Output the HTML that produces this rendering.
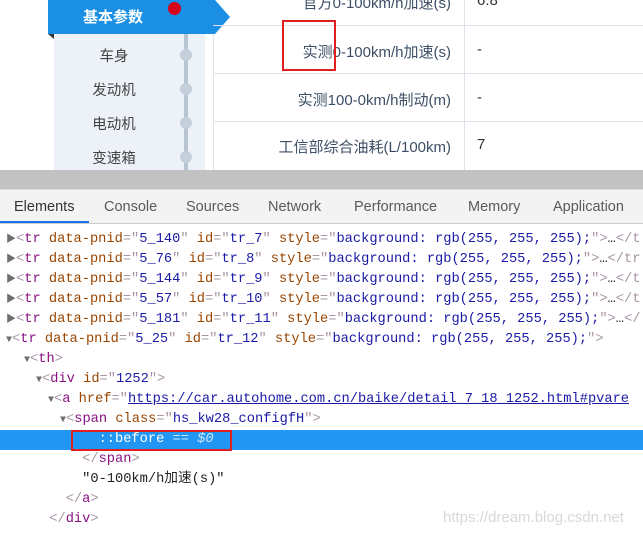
<!DOCTYPE html>
<html><head><meta charset="utf-8"><style>
*{margin:0;padding:0;box-sizing:border-box}
body{width:643px;height:537px;overflow:hidden;background:#fff;font-family:"Liberation Sans","Noto Sans CJK SC",sans-serif;position:relative}
.abs{position:absolute}
.side{left:54px;top:34px;width:151px;height:136px;background:#edf2f9}
.tab{left:48px;top:0;width:167px;height:34px;background:#1a8fe3;color:#fff;font-weight:bold;font-size:15px;line-height:36px;padding-left:35px}
.arrow{left:215px;top:0;width:0;height:0;border-top:17px solid transparent;border-bottom:17px solid transparent;border-left:15px solid #1a8fe3}
.vline{left:184px;top:0;width:4px;height:170px;background:#b8c4d2}
.dot{width:12px;height:12px;border-radius:50%;background:#c5cfdb;left:180px}
.si{left:64px;width:100px;text-align:center;font-size:14.5px;color:#444}
.cell{font-size:15px;color:#3d4f66;text-align:right;width:260px;left:191px}
.val{left:477px;font-size:15px;color:#333}
.hl{left:213px;width:430px;height:1px;background:#dde3ea}
.c{position:absolute;left:0;height:20px;font-family:"Liberation Mono","Noto Sans CJK SC",monospace;font-size:13.7px;white-space:pre;line-height:20px;color:#222}
.t{color:#881280}.a{color:#994500}.v{color:#1a1aa6}.g{color:#a894a6}
.tri{color:#6e6e6e;font-size:10px}
</style></head><body>
<div class="abs side"></div>
<div class="abs" style="left:205px;top:34px;width:8px;height:136px;background:#fff"></div>
<div class="abs vline"></div>
<div class="abs tab">基本参数</div>
<div class="abs arrow"></div>
<div class="abs" style="left:48px;top:34px;width:0;height:0;border-top:5px solid #333;border-left:6px solid transparent"></div>
<div class="abs" style="left:168px;top:2px;width:13px;height:13px;border-radius:50%;background:#d9001a"></div>
<div class="abs dot" style="top:49px"></div>
<div class="abs dot" style="top:83px"></div>
<div class="abs dot" style="top:117px"></div>
<div class="abs dot" style="top:151px"></div>
<div class="abs si" style="top:45px">车身</div>
<div class="abs si" style="top:79px">发动机</div>
<div class="abs si" style="top:113px">电动机</div>
<div class="abs si" style="top:147px">变速箱</div>
<div class="abs" style="left:213px;top:34px;width:1px;height:136px;background:#dde3ea"></div>
<div class="abs" style="left:464px;top:0;width:1px;height:170px;background:#dde3ea"></div>
<div class="abs hl" style="top:25px"></div>
<div class="abs hl" style="top:73px"></div>
<div class="abs hl" style="top:121px"></div>
<div class="abs cell" style="top:-8px">官方0-100km/h加速(s)</div>
<div class="abs val" style="top:-8px">6.8</div>
<div class="abs cell" style="top:41px">实测0-100km/h加速(s)</div>
<div class="abs val" style="top:41px">-</div>
<div class="abs cell" style="top:89px">实测100-0km/h制动(m)</div>
<div class="abs val" style="top:89px">-</div>
<div class="abs cell" style="top:136px">工信部综合油耗(L/100km)</div>
<div class="abs val" style="top:136px">7</div>
<div class="abs" style="left:282px;top:20px;width:54px;height:51px;border:2px solid #e02020"></div>
<div class="abs" style="left:0;top:170px;width:643px;height:19px;background:#c2c2c2"></div>
<div class="abs" style="left:0;top:189px;width:643px;height:35px;background:#f3f3f3;border-bottom:1px solid #ccc;border-top:1px solid #ddd"></div>
<div class="abs" style="left:0;top:221px;width:89px;height:2px;background:#1a73e8"></div>
<div class="abs" style="top:199px;left:14px;font-size:14.5px;color:#333">Elements</div>
<div class="abs" style="top:199px;left:104px;font-size:14.5px;color:#5a5a5a">Console</div>
<div class="abs" style="top:199px;left:186px;font-size:14.5px;color:#5a5a5a">Sources</div>
<div class="abs" style="top:199px;left:268px;font-size:14.5px;color:#5a5a5a">Network</div>
<div class="abs" style="top:199px;left:354px;font-size:14.5px;color:#5a5a5a">Performance</div>
<div class="abs" style="top:199px;left:468px;font-size:14.5px;color:#5a5a5a">Memory</div>
<div class="abs" style="top:199px;left:553px;font-size:14.5px;color:#5a5a5a">Application</div>
<div class="abs" style="left:0;top:430px;width:643px;height:20px;background:#2196f3"></div>
<div class="c" style="top:230px"><span class="tri"> ▶</span><span class="g">&lt;</span><span class="t">tr</span> <span class="a">data-pnid</span><span class="g">="</span><span class="v">5_140</span><span class="g">"</span> <span class="a">id</span><span class="g">="</span><span class="v">tr_7</span><span class="g">"</span> <span class="a">style</span><span class="g">="</span><span class="v">background: rgb(255, 255, 255);</span><span class="g">"&gt;</span>…<span class="g">&lt;/t</span></div>
<div class="c" style="top:250px"><span class="tri"> ▶</span><span class="g">&lt;</span><span class="t">tr</span> <span class="a">data-pnid</span><span class="g">="</span><span class="v">5_76</span><span class="g">"</span> <span class="a">id</span><span class="g">="</span><span class="v">tr_8</span><span class="g">"</span> <span class="a">style</span><span class="g">="</span><span class="v">background: rgb(255, 255, 255);</span><span class="g">"&gt;</span>…<span class="g">&lt;/tr</span></div>
<div class="c" style="top:270px"><span class="tri"> ▶</span><span class="g">&lt;</span><span class="t">tr</span> <span class="a">data-pnid</span><span class="g">="</span><span class="v">5_144</span><span class="g">"</span> <span class="a">id</span><span class="g">="</span><span class="v">tr_9</span><span class="g">"</span> <span class="a">style</span><span class="g">="</span><span class="v">background: rgb(255, 255, 255);</span><span class="g">"&gt;</span>…<span class="g">&lt;/t</span></div>
<div class="c" style="top:290px"><span class="tri"> ▶</span><span class="g">&lt;</span><span class="t">tr</span> <span class="a">data-pnid</span><span class="g">="</span><span class="v">5_57</span><span class="g">"</span> <span class="a">id</span><span class="g">="</span><span class="v">tr_10</span><span class="g">"</span> <span class="a">style</span><span class="g">="</span><span class="v">background: rgb(255, 255, 255);</span><span class="g">"&gt;</span>…<span class="g">&lt;/t</span></div>
<div class="c" style="top:310px"><span class="tri"> ▶</span><span class="g">&lt;</span><span class="t">tr</span> <span class="a">data-pnid</span><span class="g">="</span><span class="v">5_181</span><span class="g">"</span> <span class="a">id</span><span class="g">="</span><span class="v">tr_11</span><span class="g">"</span> <span class="a">style</span><span class="g">="</span><span class="v">background: rgb(255, 255, 255);</span><span class="g">"&gt;</span>…<span class="g">&lt;/</span></div>
<div class="c" style="top:330px"><span class="tri"> ▼</span><span class="g">&lt;</span><span class="t">tr</span> <span class="a">data-pnid</span><span class="g">="</span><span class="v">5_25</span><span class="g">"</span> <span class="a">id</span><span class="g">="</span><span class="v">tr_12</span><span class="g">"</span> <span class="a">style</span><span class="g">="</span><span class="v">background: rgb(255, 255, 255);</span><span class="g">"&gt;</span></div>
<div class="c" style="top:350px"><span class="tri">    ▼</span><span class="g">&lt;</span><span class="t">th</span><span class="g">&gt;</span></div>
<div class="c" style="top:370px"><span class="tri">      ▼</span><span class="g">&lt;</span><span class="t">div</span> <span class="a">id</span><span class="g">="</span><span class="v">1252</span><span class="g">"&gt;</span></div>
<div class="c" style="top:390px"><span class="tri">        ▼</span><span class="g">&lt;</span><span class="t">a</span> <span class="a">href</span><span class="g">="</span><span class="v" style="text-decoration:underline">https://car.autohome.com.cn/baike/detail_7_18_1252.html#pvare</span></div>
<div class="c" style="top:410px"><span class="tri">          ▼</span><span class="g">&lt;</span><span class="t">span</span> <span class="a">class</span><span class="g">="</span><span class="v">hs_kw28_configfH</span><span class="g">"&gt;</span></div>
<div class="c" style="top:430px;color:#fff">            ::before <span style="color:#cfe6fb">== <i>$0</i></span></div>
<div class="c" style="top:450px"><span class="g">          &lt;/</span><span class="t">span</span><span class="g">&gt;</span></div>
<div class="c" style="top:470px">          "0-100km/h加速(s)"</div>
<div class="c" style="top:490px"><span class="g">        &lt;/</span><span class="t">a</span><span class="g">&gt;</span></div>
<div class="c" style="top:510px"><span class="g">      &lt;/</span><span class="t">div</span><span class="g">&gt;</span></div>
<div class="abs" style="left:71px;top:430px;width:161px;height:21px;border:2px solid #e02020"></div>
<div class="abs" style="left:443px;top:509px;font-size:15px;color:#d8d8d8">https://dream.blog.csdn.net</div>
</body></html>
